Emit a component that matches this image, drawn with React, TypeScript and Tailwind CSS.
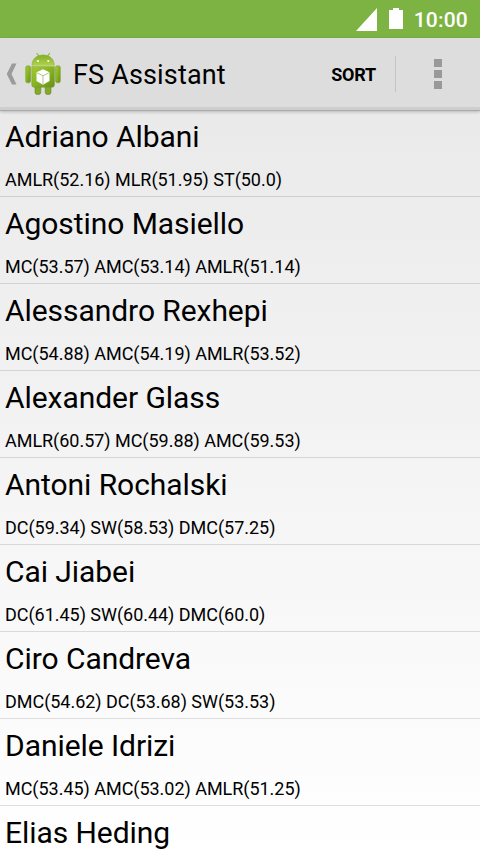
const players = [
  { name: 'Adriano Albani', ratings: 'AMLR(52.16) MLR(51.95) ST(50.0)' },
  { name: 'Agostino Masiello', ratings: 'MC(53.57) AMC(53.14) AMLR(51.14)' },
  { name: 'Alessandro Rexhepi', ratings: 'MC(54.88) AMC(54.19) AMLR(53.52)' },
  { name: 'Alexander Glass', ratings: 'AMLR(60.57) MC(59.88) AMC(59.53)' },
  { name: 'Antoni Rochalski', ratings: 'DC(59.34) SW(58.53) DMC(57.25)' },
  { name: 'Cai Jiabei', ratings: 'DC(61.45) SW(60.44) DMC(60.0)' },
  { name: 'Ciro Candreva', ratings: 'DMC(54.62) DC(53.68) SW(53.53)' },
  { name: 'Daniele Idrizi', ratings: 'MC(53.45) AMC(53.02) AMLR(51.25)' },
  { name: 'Elias Heding', ratings: '' },
];

function StatusBar() {
  return (
    <div className="flex h-[38px] shrink-0 items-center bg-[#7cb342] pr-3 text-white">
      <svg className="mb-[1px] ml-auto" width="22" height="24" viewBox="0 0 22 24">
        <path d="M21 1v23H0z" fill="#fff" />
      </svg>
      <svg className="mb-[1px] ml-[11px]" width="14" height="21" viewBox="0 0 14 21">
        <path d="M4 0h6v2h3.500q0.500 0 0.500 0.500v18q0 0.500-0.500 0.500H0.500q-0.500 0-0.500-0.500v-18q0-0.500 0.500-0.500H4z" fill="#fff" />
      </svg>
      <span className="mt-[2px] ml-[11px] text-[21px] leading-6 font-medium tracking-[0.2px]">10:00</span>
    </div>
  );
}

function AndroidIcon() {
  return (
    <svg width="36" height="44" viewBox="0 0 36 44">
      <defs>
        <linearGradient id="body" x1="0" y1="0" x2="1" y2="1">
          <stop offset="0" stopColor="#a4cb36" />
          <stop offset="0.5" stopColor="#87b324" />
          <stop offset="1" stopColor="#688e18" />
        </linearGradient>
        <linearGradient id="head" x1="0" y1="0" x2="0" y2="1">
          <stop offset="0" stopColor="#84ae2a" />
          <stop offset="1" stopColor="#b0d448" />
        </linearGradient>
      </defs>
      <path d="M12 1.500l2.500 3.500M24.500 1.500L22 5" stroke="#93b834" strokeWidth="1.2" strokeLinecap="round" />
      <rect x="0.7" y="13.8" width="4.800" height="17" rx="1.8" fill="url(#body)" stroke="#7d9f2c" strokeWidth="0.6" />
      <rect x="30.500" y="13.800" width="4.800" height="17" rx="1.8" fill="url(#body)" stroke="#7d9f2c" strokeWidth="0.6" />
      <path d="M10 33h5.800v7.500q0 2-2.900 2T10 40.500zM20.200 33H26v7.500q0 2-2.900 2t-2.900-2z" fill="#84a92a" stroke="#688824" strokeWidth="0.6" />
      <path d="M6.800 14.500h22.600V33q0 2.200-2.200 2.200H9Q6.800 35.200 6.800 33z" fill="url(#body)" stroke="#759925" strokeWidth="0.5" />
      <path d="M7 13.500C7 6.500 12 3 18.100 3S29.200 6.500 29.200 13.500z" fill="url(#head)" stroke="#7d9f2c" strokeWidth="0.5" />
      <path d="M7 13.800h22.200" stroke="#d0e58b" strokeWidth="0.8" />
      <circle cx="13" cy="9" r="1.100" fill="#fff" />
      <circle cx="23.300" cy="9" r="1.100" fill="#fff" />
      <path d="M18 17.300l6.500 3v8.700L18 32.800 11.500 29v-8.700z" fill="#fff" />
      <path d="M11.800 20.700L18 23.800l6.200-3.100M18 23.800v8.200" fill="none" stroke="#9eb56b" strokeWidth="0.8" />
    </svg>
  );
}

function ActionBar() {
  return (
    <div className="z-10 flex h-[73px] shrink-0 items-center border-b border-[#aaa] bg-[#ddd] shadow-[inset_0_-3px_0_#cecece,0_1px_3px_rgba(0,0,0,0.22)]">
      <svg className="ml-[6px]" width="12" height="22" viewBox="0 0 12 22">
        <path d="M6 0.500h4.500L5.500 11l5 10.500H6L0.700 11z" fill="#9b9b9b" />
      </svg>
      <div className="ml-[7px]">
        <AndroidIcon />
      </div>
      <h1 className="mt-[2px] ml-3 text-[27px] leading-8 tracking-[0.16px]">FS Assistant</h1>
      <button className="mt-[2px] mr-[19px] ml-auto text-[18px] leading-6 font-bold tracking-[-0.2px]">SORT</button>
      <div className="h-9 w-px bg-[#c3c3c3]" />
      <div className="mr-[38px] ml-[38px] flex flex-col gap-[3px]">
        <i className="size-2 bg-[#999]" />
        <i className="size-2 bg-[#999]" />
        <i className="size-2 bg-[#999]" />
      </div>
    </div>
  );
}

export default function App() {
  return (
    <div className="flex h-[854px] w-[480px] flex-col overflow-hidden bg-[#e8e8e8] font-['Roboto',sans-serif] text-black">
      <StatusBar />
      <ActionBar />
      <div className="min-h-0 flex-1 overflow-hidden bg-linear-to-b from-[#eaeaea] to-white">
        {players.map((p, i) => (
          <div
            key={p.name}
            className={`border-b border-black/12 px-[5px] pb-1 ${i === 0 ? 'h-[86px] pt-[6px]' : 'h-[87px] pt-[7px]'}`}
          >
            <div className="text-[30px] leading-10 tracking-[-0.06px]">{p.name}</div>
            <div className="mt-[11px] text-[18px] leading-6 tracking-[-0.03px]">{p.ratings}</div>
          </div>
        ))}
      </div>
    </div>
  );
}
